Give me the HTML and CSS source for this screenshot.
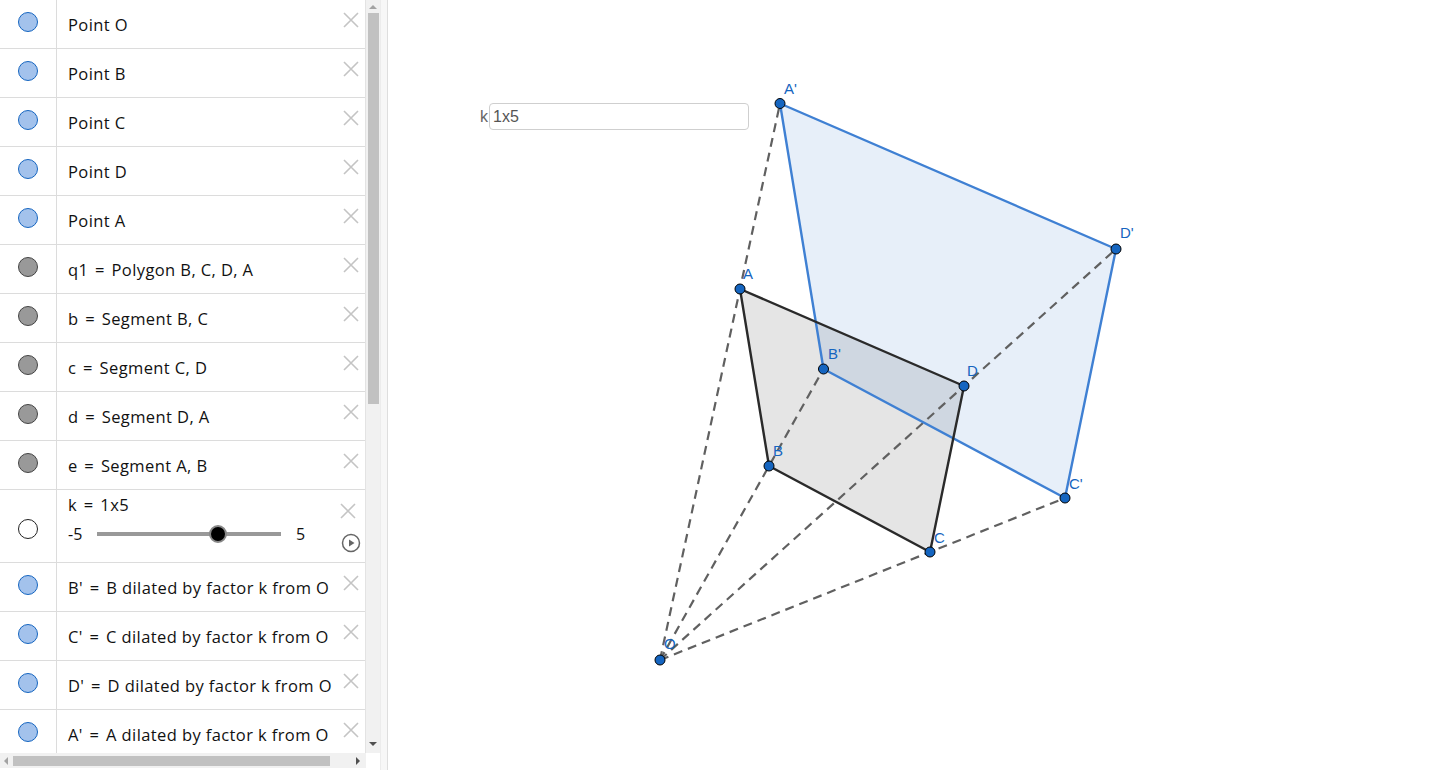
FILE: index.html
```html
<!DOCTYPE html>
<html>
<head>
<meta charset="utf-8">
<link rel="stylesheet" href="styles.css">
</head>
<body>
<div class="app">
  <div class="algebra">
    <div class="list-area">
      <div class="rows">
        <div class="row"><div class="icon"><span class="dot blue"></span></div><div class="content">Point O</div><div class="del"><svg viewBox="0 0 16 16"><path d="M1 1L15 15M15 1L1 15"/></svg></div></div>
        <div class="row"><div class="icon"><span class="dot blue"></span></div><div class="content">Point B</div><div class="del"><svg viewBox="0 0 16 16"><path d="M1 1L15 15M15 1L1 15"/></svg></div></div>
        <div class="row"><div class="icon"><span class="dot blue"></span></div><div class="content">Point C</div><div class="del"><svg viewBox="0 0 16 16"><path d="M1 1L15 15M15 1L1 15"/></svg></div></div>
        <div class="row"><div class="icon"><span class="dot blue"></span></div><div class="content">Point D</div><div class="del"><svg viewBox="0 0 16 16"><path d="M1 1L15 15M15 1L1 15"/></svg></div></div>
        <div class="row"><div class="icon"><span class="dot blue"></span></div><div class="content">Point A</div><div class="del"><svg viewBox="0 0 16 16"><path d="M1 1L15 15M15 1L1 15"/></svg></div></div>
        <div class="row"><div class="icon"><span class="dot gray"></span></div><div class="content">q1 <span class="eq">=</span> Polygon B, C, D, A</div><div class="del"><svg viewBox="0 0 16 16"><path d="M1 1L15 15M15 1L1 15"/></svg></div></div>
        <div class="row"><div class="icon"><span class="dot gray"></span></div><div class="content">b <span class="eq">=</span> Segment B, C</div><div class="del"><svg viewBox="0 0 16 16"><path d="M1 1L15 15M15 1L1 15"/></svg></div></div>
        <div class="row"><div class="icon"><span class="dot gray"></span></div><div class="content">c <span class="eq">=</span> Segment C, D</div><div class="del"><svg viewBox="0 0 16 16"><path d="M1 1L15 15M15 1L1 15"/></svg></div></div>
        <div class="row"><div class="icon"><span class="dot gray"></span></div><div class="content">d <span class="eq">=</span> Segment D, A</div><div class="del"><svg viewBox="0 0 16 16"><path d="M1 1L15 15M15 1L1 15"/></svg></div></div>
        <div class="row"><div class="icon"><span class="dot gray"></span></div><div class="content">e <span class="eq">=</span> Segment A, B</div><div class="del"><svg viewBox="0 0 16 16"><path d="M1 1L15 15M15 1L1 15"/></svg></div></div>
        <div class="row slider-row">
          <div class="icon"><span class="dot white"></span></div>
          <div class="content slider-content">
            <div class="slider-title">k <span class="eq">=</span> 1x5</div>
            <div class="slider-line">
              <span class="min">-5</span>
              <div class="track"><span class="knob"></span></div>
              <span class="max">5</span>
            </div>
          </div>
          <div class="side">
            <div class="del"><svg viewBox="0 0 16 16"><path d="M1 1L15 15M15 1L1 15"/></svg></div>
            <div class="play"><svg viewBox="0 0 20 20"><circle cx="10" cy="10" r="8.5"/><path class="tri" d="M8 6.5L13.5 10L8 13.5Z"/></svg></div>
          </div>
        </div>
        <div class="row"><div class="icon"><span class="dot blue"></span></div><div class="content">B' <span class="eq">=</span> B dilated by factor k from O</div><div class="del"><svg viewBox="0 0 16 16"><path d="M1 1L15 15M15 1L1 15"/></svg></div></div>
        <div class="row"><div class="icon"><span class="dot blue"></span></div><div class="content">C' <span class="eq">=</span> C dilated by factor k from O</div><div class="del"><svg viewBox="0 0 16 16"><path d="M1 1L15 15M15 1L1 15"/></svg></div></div>
        <div class="row"><div class="icon"><span class="dot blue"></span></div><div class="content">D' <span class="eq">=</span> D dilated by factor k from O</div><div class="del"><svg viewBox="0 0 16 16"><path d="M1 1L15 15M15 1L1 15"/></svg></div></div>
        <div class="row"><div class="icon"><span class="dot blue"></span></div><div class="content">A' <span class="eq">=</span> A dilated by factor k from O</div><div class="del"><svg viewBox="0 0 16 16"><path d="M1 1L15 15M15 1L1 15"/></svg></div></div>
      </div>
      <div class="vscroll">
        <span class="arrow up"></span>
        <div class="vthumb"></div>
        <span class="arrow down"></span>
      </div>
    </div>
    <div class="hbar">
      <div class="hscroll">
        <span class="arrow left"></span>
        <div class="hthumb"></div>
        <span class="arrow right"></span>
      </div>
      <div class="corner"></div>
    </div>
  </div>
  <div class="divider"></div>
  <div class="canvas">
    <div class="input-box"><span class="input-label">k</span><div class="input-field">1x5</div></div>
    <svg class="graphics" viewBox="388 0 1052 770" width="1052" height="770">
      <polygon class="poly-gray" points="769,466 930,552 964,386 740,289"/>
      <polygon class="poly-blue" points="823.5,369 1065,498 1116,249 780,103.5"/>
      <g class="dashed">
        <line x1="660" y1="660" x2="780" y2="103.5"/>
        <line x1="660" y1="660" x2="823.5" y2="369"/>
        <line x1="660" y1="660" x2="1065" y2="498"/>
        <line x1="660" y1="660" x2="1116" y2="249"/>
      </g>
      <g class="blue-edges">
        <line x1="823.5" y1="369" x2="1065" y2="498"/>
        <line x1="1065" y1="498" x2="1116" y2="249"/>
        <line x1="1116" y1="249" x2="780" y2="103.5"/>
        <line x1="780" y1="103.5" x2="823.5" y2="369"/>
      </g>
      <g class="dark-edges">
        <line x1="769" y1="466" x2="930" y2="552"/>
        <line x1="930" y1="552" x2="964" y2="386"/>
        <line x1="964" y1="386" x2="740" y2="289"/>
        <line x1="740" y1="289" x2="769" y2="466"/>
      </g>
      <g class="pts">
        <circle cx="660" cy="660" r="5"/>
        <circle cx="740" cy="289" r="5"/>
        <circle cx="769" cy="466" r="5"/>
        <circle cx="930" cy="552" r="5"/>
        <circle cx="964" cy="386" r="5"/>
        <circle cx="780" cy="103.5" r="5"/>
        <circle cx="823.5" cy="369" r="5"/>
        <circle cx="1065" cy="498" r="5"/>
        <circle cx="1116" cy="249" r="5"/>
      </g>
      <g class="labels">
        <text x="664" y="649">O</text>
        <text x="743" y="279">A</text>
        <text x="773" y="456">B</text>
        <text x="934" y="543">C</text>
        <text x="967" y="376">D</text>
        <text x="784" y="94">A'</text>
        <text x="828" y="359">B'</text>
        <text x="1069" y="489">C'</text>
        <text x="1120" y="238">D'</text>
      </g>
    </svg>
  </div>
</div>
</body>
</html>
```

FILE: styles.css
```css
* { box-sizing: border-box; }
html, body { margin: 0; padding: 0; background: #fff; }
body { width: 1440px; height: 770px; overflow: hidden; font-family: "Open Sans", "DejaVu Sans", sans-serif; color: #000; }

.app { display: flex; width: 1440px; height: 770px; }

.algebra { width: 380px; height: 770px; display: flex; flex-direction: column; flex-shrink: 0; }
.list-area { display: flex; height: 753px; }
.rows { width: 366px; height: 753px; overflow: hidden; border-right: 1px solid #e3e3e3; }

.row { display: flex; align-items: center; height: 49px; border-bottom: 1px solid #dcdcdc; }
.icon { width: 57px; height: 100%; border-right: 1px solid #dcdcdc; display: flex; align-items: center; justify-content: center; flex-shrink: 0; padding-bottom: 4px; }
.dot { display: block; width: 20px; height: 20px; border-radius: 50%; }
.dot.blue { background: #a3c2ec; border: 1px solid #1565c0; }
.dot.gray { background: #999; border: 1px solid #444; }
.dot.white { background: #fff; border: 1px solid #222; }

.content { flex: 1; padding-left: 11px; font-size: 16.5px; letter-spacing: 0.4px; white-space: nowrap; overflow: hidden; padding-top: 1px; color: #111; }
.eq { margin: 0 2px; }
.del { width: 16px; height: 16px; margin-right: 6px; align-self: flex-start; margin-top: 12px; flex-shrink: 0; }
.del svg { display: block; width: 16px; height: 16px; stroke: #c4c4c4; stroke-width: 1.6; fill: none; }

.slider-row { height: 73px; align-items: stretch; }
.slider-row .icon { align-items: center; padding-top: 6px; padding-bottom: 0; }
.slider-content { display: flex; flex-direction: column; padding-top: 3px; }
.slider-title { font-size: 16.5px; line-height: 24px; }
.slider-line { display: flex; align-items: center; height: 34px; }
.slider-line .min { width: 29px; font-size: 16px; letter-spacing: 0; }
.slider-line .max { margin-left: 15px; font-size: 16px; }
.track { position: relative; width: 184px; height: 4px; background: #999; }
.knob { position: absolute; left: 112px; top: -7px; width: 18px; height: 18px; border-radius: 50%; background: #000; border: 2px solid #888; }
.side { display: flex; flex-direction: column; align-items: center; width: 22px; margin-right: 3px; }
.side .del { margin: 13px 0 0 0; }
.play { width: 20px; height: 20px; margin-top: 14px; }
.play svg { display: block; width: 20px; height: 20px; }
.play circle { fill: none; stroke: #666; stroke-width: 1.5; }
.play .tri { fill: #666; }

.vscroll { width: 14px; height: 753px; background: #f1f1f1; display: flex; flex-direction: column; align-items: center; }
.vthumb { width: 11px; height: 391px; background: #c1c1c1; margin-top: 4px; }
.arrow { display: block; width: 0; height: 0; }
.arrow.up { margin-top: 5px; border-left: 4px solid transparent; border-right: 4px solid transparent; border-bottom: 4px solid #a3a3a3; }
.arrow.down { margin-top: auto; margin-bottom: 7px; border-left: 4px solid transparent; border-right: 4px solid transparent; border-top: 4px solid #505050; }

.hbar { display: flex; height: 17px; }
.hscroll { width: 366px; height: 15px; background: #f1f1f1; display: flex; align-items: center; }
.hthumb { width: 317px; height: 10px; background: #c1c1c1; margin-left: 5px; }
.arrow.left { margin-left: 4px; border-top: 4px solid transparent; border-bottom: 4px solid transparent; border-right: 4px solid #a3a3a3; }
.arrow.right { margin-left: auto; margin-right: 6px; border-top: 4px solid transparent; border-bottom: 4px solid transparent; border-left: 4px solid #505050; }
.corner { flex: 1; background: #fff; }

.divider { width: 8px; height: 770px; background: #f7f7f7; border-left: 1px solid #ececec; border-right: 1px solid #dedede; flex-shrink: 0; }

.canvas { position: relative; flex: 1; height: 770px; overflow: hidden; }
.graphics { display: block; }

.input-box { position: absolute; left: 92px; top: 103px; display: flex; align-items: center; }
.input-label { font-family: "Liberation Sans", Arial, sans-serif; font-size: 16px; color: #666; margin-right: 1px; }
.input-field { width: 260px; height: 27px; border: 1px solid #cfcfcf; border-radius: 4px; padding-left: 3px; font-family: "Liberation Sans", Arial, sans-serif; font-size: 16px; line-height: 25px; color: #555; }

.poly-gray { fill: rgba(0,0,0,0.1); stroke: none; }
.poly-blue { fill: rgba(21,101,192,0.1); stroke: none; }
.dashed line { stroke: #606060; stroke-width: 2.2; stroke-dasharray: 9 6; }
.blue-edges line { stroke: #3f80d3; stroke-width: 2.4; stroke-linecap: round; }
.dark-edges line { stroke: #2a2a2a; stroke-width: 2.4; stroke-linecap: round; }
.pts circle { fill: #1565c0; stroke: #000; stroke-width: 1; }
.labels text { fill: #1565c0; font-family: "Liberation Sans", Arial, sans-serif; font-size: 15px; }
```
